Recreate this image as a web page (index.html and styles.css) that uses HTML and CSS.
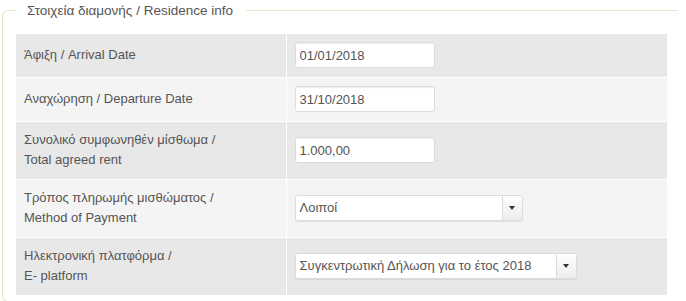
FILE: index.html
```html
<!DOCTYPE html>
<html lang="el">
<head>
  <meta charset="UTF-8" />
  <title>Residence info</title>
  <link rel="stylesheet" href="styles.css">
</head>
<body>
  <fieldset class="residence">
    <legend>Στοιχεία διαμονής / Residence info</legend>
    <table class="info-table">
      <tr class="row-dark">
        <td class="label">Άφιξη / Arrival Date</td>
        <td class="field"><input class="text-input" type="text" value="01/01/2018"></td>
      </tr>
      <tr class="row-light">
        <td class="label">Αναχώρηση / Departure Date</td>
        <td class="field"><input class="text-input" type="text" value="31/10/2018"></td>
      </tr>
      <tr class="row-dark">
        <td class="label">Συνολικό συμφωνηθέν μίσθωμα /<br>Total agreed rent</td>
        <td class="field"><input class="text-input" type="text" value="1.000,00"></td>
      </tr>
      <tr class="row-light">
        <td class="label">Τρόπος πληρωμής μισθώματος /<br>Method of Payment</td>
        <td class="field">
          <div class="select select-short">
            <span class="select-text">Λοιποί</span>
            <span class="select-btn"><span class="caret"></span></span>
          </div>
        </td>
      </tr>
      <tr class="row-dark">
        <td class="label">Ηλεκτρονική πλατφόρμα /<br>E- platform</td>
        <td class="field">
          <div class="select select-long">
            <span class="select-text">Συγκεντρωτική Δήλωση για το έτος 2018</span>
            <span class="select-btn"><span class="caret"></span></span>
          </div>
        </td>
      </tr>
    </table>
  </fieldset>
</body>
</html>
```

FILE: styles.css
```css
* { box-sizing: border-box; }
body {
  margin: 0;
  font-family: "Liberation Sans", Arial, sans-serif;
  font-size: 13px;
  color: #555;
  background: #fff;
}
.residence {
  margin: 0 8px 0 2px;
  padding: 0 11px 6px 13px;
  border: 1px solid #e1e7c2;
  border-right: none;
  border-radius: 6px 0 0 6px;
}
.residence legend {
  padding: 1px 13px 0 11px;
  font-size: 13.5px;
  line-height: 20px;
  color: #555;
}
.info-table {
  width: 651px;
  margin-top: 13px;
  border-collapse: collapse;
}
.info-table td {
  border: 1px solid #fff;
  padding: 8px 8px 9px;
  vertical-align: middle;
  line-height: 20px;
}
.info-table tr:first-child td { border-top: none; }
.info-table tr:last-child td { border-bottom: none; }
.info-table td:first-child { border-left: none; }
.info-table td:last-child { border-right: none; }
.row-dark td { background: #e8e8e8; }
.row-light td { background: #f4f4f4; }
.label { width: 270px; }
.field { padding-left: 9px; }
.text-input {
  display: block;
  width: 140px;
  height: 26px;
  padding: 0 4px;
  border: 1px solid #dcdcdc;
  border-radius: 3px;
  background: #fff;
  box-shadow: inset 0 1px 1px rgba(0, 0, 0, 0.06);
  font-family: inherit;
  font-size: 13px;
  color: #555;
}
.select {
  display: flex;
  height: 26px;
  border: 1px solid #dcdcdc;
  border-radius: 3px;
  background: #fff;
  box-shadow: 0 1px 1px rgba(0, 0, 0, 0.08);
}
.select-short { width: 228px; }
.select-long { width: 282px; }
.select-text {
  flex: 1;
  padding: 0 4px;
  line-height: 24px;
  color: #555;
  white-space: nowrap;
  overflow: hidden;
}
.select-btn {
  width: 20px;
  display: flex;
  align-items: center;
  justify-content: center;
  border-left: 1px solid #dcdcdc;
  border-radius: 0 3px 3px 0;
  background: linear-gradient(#fff, #ececec);
}
.caret {
  width: 0;
  height: 0;
  border-left: 3.5px solid transparent;
  border-right: 3.5px solid transparent;
  border-top: 4px solid #333;
}
```
